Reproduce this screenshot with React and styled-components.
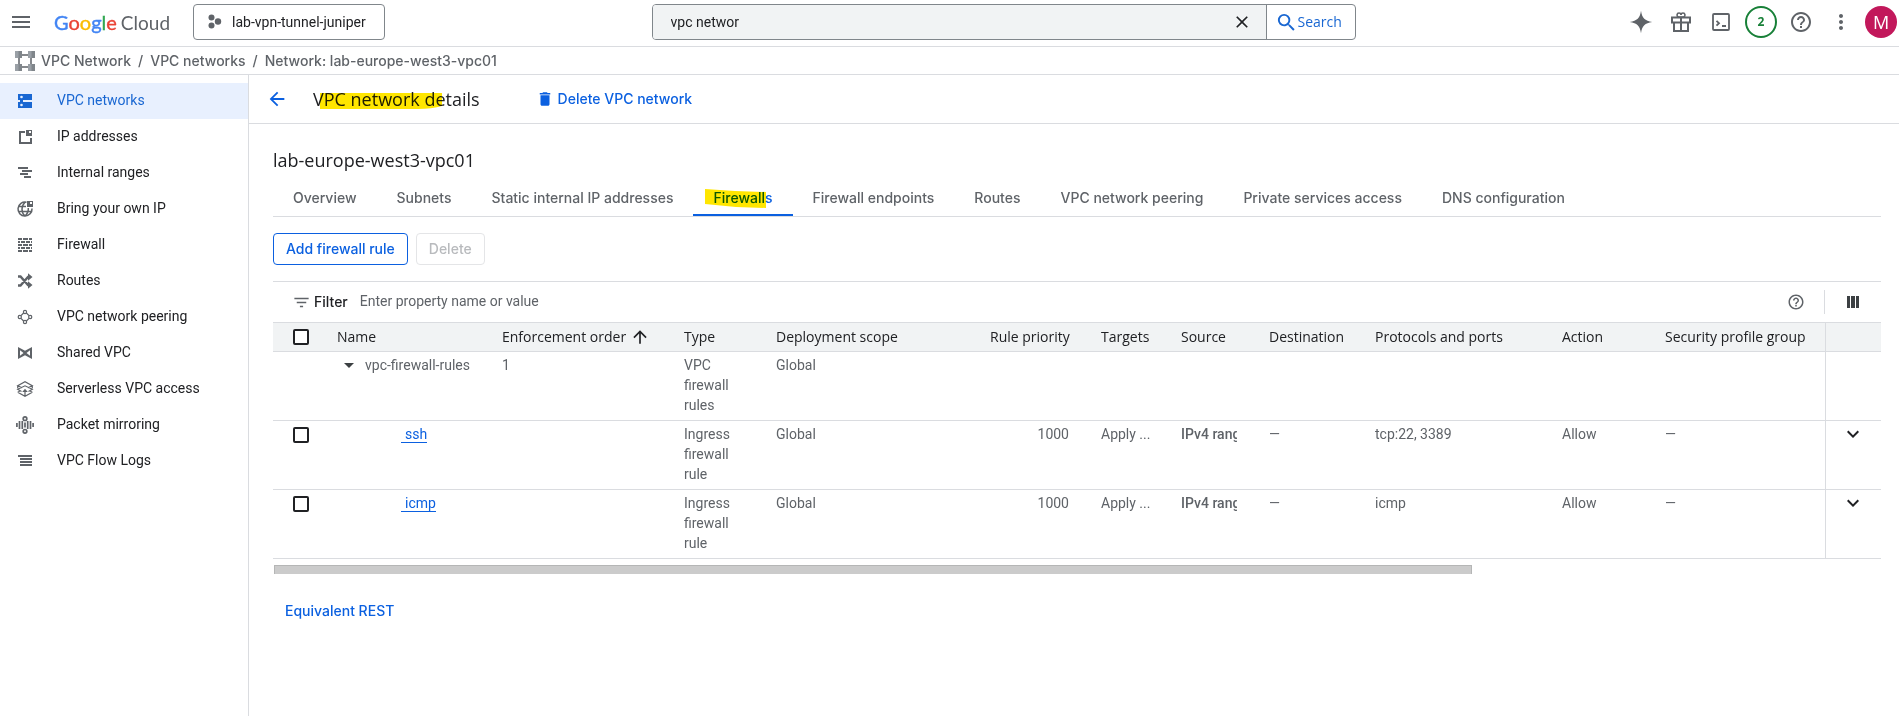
import * as React from 'react';
import styled, { createGlobalStyle } from 'styled-components';
import {
  MdArrowBack,
  MdArrowDropDown,
  MdArrowUpward,
  MdClose,
  MdDelete,
  MdExpandMore,
  MdFilterList,
  MdHelpOutline,
  MdMenu,
  MdMoreVert,
  MdSearch,
} from 'react-icons/md';

const c = {
  text: '#202124',
  grey: '#5f6368',
  border: '#dadce0',
  outline: '#80868b',
  blue: '#0b60e0',
  navBlue: '#1967d2',
  navActive: '#e8f0fe',
  panel: '#f1f3f4',
  green: '#188038',
  marker: '#ffe600',
};

const f = {
  body: "Roboto, 'Liberation Sans', sans-serif",
  label: "Inter, 'Open Sans', sans-serif",
  title: "'Open Sans', 'Noto Sans', sans-serif",
  logo: "Lato, 'Open Sans', sans-serif",
};

const GlobalStyle = createGlobalStyle`
  * {
    box-sizing: border-box;
  }

  body {
    margin: 0;
    background: #fff;
    color: ${c.text};
    font-family: ${f.body};
    font-size: 14px;
    line-height: 20px;
  }

  button,
  input {
    font: inherit;
    color: inherit;
  }

  button {
    padding: 0;
    border: none;
    background: none;
    cursor: pointer;
  }

  a {
    color: inherit;
    text-decoration: none;
  }

  svg {
    display: block;
    flex-shrink: 0;
  }
`;

const Page = styled.div`
  display: flex;
  flex-direction: column;
  min-height: 100vh;
`;

/* top bar */

const TopBar = styled.header`
  display: flex;
  align-items: center;
  height: 47px;
  padding-bottom: 2px;
  border-bottom: 1px solid ${c.border};
`;

const TopLeft = styled.div`
  flex: 6 1 0;
  display: flex;
  align-items: center;
  padding-left: 9px;
`;

const TopRight = styled.div`
  flex: 5 1 0;
  display: flex;
  align-items: center;
  justify-content: flex-end;
  gap: 8px;
  padding-right: 2px;
`;

const IconButton = styled.button`
  display: flex;
  align-items: center;
  justify-content: center;
  width: ${(p) => p.$size || 32}px;
  height: ${(p) => p.$size || 32}px;
  color: ${(p) => p.$color || c.grey};
`;

const Logo = styled.a`
  display: flex;
  align-items: baseline;
  gap: 4px;
  margin: 0 23px 0 21px;
  font-family: ${f.logo};
  font-size: 20px;
  line-height: 28px;
  color: ${c.grey};
`;

const LogoWord = styled.span`
  -webkit-text-stroke: 0.4px currentColor;
`;

const Letter = styled.span`
  color: ${(p) => p.$color};
`;

const LogoSuffix = styled.span`
  font-size: 19px;
`;

const ProjectPicker = styled.button`
  display: flex;
  align-items: center;
  gap: 10px;
  height: 36px;
  padding: 0 18px 0 14px;
  border: 1px solid ${c.outline};
  border-radius: 4px;
  white-space: nowrap;
`;

const SearchBox = styled.form`
  flex: 0 1 704px;
  display: flex;
  height: 36px;
  margin-right: 6px;
  border: 1px solid ${c.outline};
  border-radius: 4px;
  overflow: hidden;
`;

const SearchField = styled.div`
  flex: 1;
  display: flex;
  align-items: center;
  padding-right: 8px;
  background: ${c.panel};
`;

const SearchInput = styled.input`
  flex: 1;
  min-width: 0;
  padding: 0 18px;
  border: none;
  outline: none;
  background: transparent;
`;

const SearchButton = styled.button`
  display: flex;
  align-items: center;
  width: 89px;
  padding-left: 8px;
  border-left: 1px solid ${c.outline};
  font-family: ${f.title};
  font-weight: 500;
  color: ${c.navBlue};
`;

const Round = styled.button`
  width: 32px;
  height: 32px;
  border-radius: 50%;
  font-family: ${f.title};
`;

const Notifications = styled(Round)`
  border: 2px solid ${c.green};
  font-size: 12px;
  font-weight: 700;
  color: ${c.green};
`;

const Avatar = styled(Round)`
  background: #c2185b;
  font-size: 18px;
  color: #fff;
`;

/* breadcrumbs */

const Breadcrumbs = styled.nav`
  display: flex;
  align-items: center;
  gap: 7px;
  height: 28px;
  padding-left: 15px;
  border-bottom: 1px solid ${c.border};
  font-family: ${f.label};
  font-weight: 500;
  color: ${c.grey};
`;

const Product = styled.a`
  display: flex;
  align-items: center;
  gap: 6px;
`;

/* side navigation */

const Body = styled.div`
  flex: 1;
  display: flex;
`;

const SideNav = styled.nav`
  flex: 0 0 249px;
  padding-top: 8px;
  border-right: 1px solid ${c.border};
`;

const NavItem = styled.a`
  display: flex;
  align-items: center;
  gap: 23px;
  height: 36px;
  padding: 0 0 2px 16px;
  background: ${(p) => (p.$active ? c.navActive : 'transparent')};
  color: ${(p) => (p.$active ? c.navBlue : c.text)};

  svg {
    color: ${(p) => (p.$active ? c.navBlue : c.grey)};
    margin-top: 2px;
  }
`;

/* main area */

const Main = styled.main`
  flex: 1;
  min-width: 0;
`;

const PageHeader = styled.div`
  display: flex;
  align-items: center;
  height: 49px;
  padding-left: 17px;
  border-bottom: 1px solid ${c.border};
`;

const Title = styled.h1`
  position: relative;
  margin: 0 56px 0 25px;
  font-family: ${f.title};
  font-weight: 400;
  font-size: 18px;
  line-height: 24px;
`;

const TextButton = styled.button`
  display: flex;
  align-items: center;
  gap: 4px;
  font-family: ${f.label};
  font-weight: 500;
  color: ${c.blue};
`;

const Marker = styled.svg`
  position: absolute;
  left: ${(p) => p.$left}px;
  top: ${(p) => p.$top}px;
  fill: ${c.marker};
  mix-blend-mode: multiply;
  pointer-events: none;
`;

const Content = styled.div`
  padding: 24px 18px 24px 24px;
`;

const Name = styled.h2`
  margin: 0 0 12px;
  font-family: ${f.title};
  font-weight: 400;
  font-size: 18px;
  line-height: 24px;
`;

const Tabs = styled.div`
  display: flex;
  border-bottom: 1px solid ${c.border};
`;

const Tab = styled.button`
  position: relative;
  height: 32px;
  padding: 0 20px 3px;
  border-bottom: 2px solid ${(p) => (p.$active ? c.blue : 'transparent')};
  font-family: ${f.label};
  font-weight: 500;
  color: ${(p) => (p.$active ? c.blue : c.grey)};
  white-space: nowrap;
`;

const Actions = styled.div`
  display: flex;
  gap: 8px;
  padding: 16px 0;
`;

const OutlineButton = styled.button`
  height: 32px;
  padding: 0 12px;
  border: 1px solid ${c.blue};
  border-radius: 4px;
  font-family: ${f.label};
  font-weight: 500;
  color: ${c.blue};

  &:disabled {
    border-color: #e4e5e7;
    color: #b8babd;
  }
`;

const FilterBar = styled.div`
  display: flex;
  align-items: center;
  height: 41px;
  border-top: 1px solid ${c.border};
  padding-left: 19px;
`;

const FilterLabel = styled.label`
  display: flex;
  align-items: center;
  gap: 3px;
  font-family: ${f.label};
  font-weight: 500;

  svg {
    color: ${c.grey};
  }
`;

const FilterInput = styled.input`
  flex: 1;
  min-width: 0;
  padding: 0 12px 2px;
  border: none;
  outline: none;
  background: transparent;

  &::placeholder {
    color: ${c.grey};
    opacity: 1;
  }
`;

const Divider = styled.span`
  width: 1px;
  height: 24px;
  margin-left: 12px;
  background: ${c.border};
`;

const ColumnsButton = styled(IconButton)`
  width: 56px;
  color: #3c4043;
`;

const Table = styled.table`
  width: 100%;
  table-layout: fixed;
  border-collapse: separate;
  border-spacing: 0;
`;

const Th = styled.th`
  height: 30px;
  padding: 0 16px;
  border-top: 1px solid ${c.border};
  border-bottom: 1px solid ${c.border};
  background: ${c.panel};
  font-family: ${f.title};
  font-weight: 500;
  text-align: ${(p) => p.$align || 'left'};
  white-space: nowrap;
`;

const Sort = styled.span`
  display: flex;
  align-items: center;
  gap: 4px;
`;

const Td = styled.td`
  height: 69px;
  padding: 3px 16px 4px;
  border-bottom: 1px solid ${c.border};
  color: ${c.grey};
  text-align: ${(p) => p.$align || 'left'};
  vertical-align: top;
`;

const CheckTh = styled(Th)`
  padding: 0 0 0 20px;
`;

const CheckTd = styled(Td)`
  padding: 6px 0 0 20px;
`;

const MenuTh = styled(Th)`
  border-left: 1px solid ${c.border};
`;

const MenuTd = styled(Td)`
  padding: 3px 0 0 17px;
  border-left: 1px solid ${c.border};
`;

const Checkbox = styled.input`
  appearance: none;
  display: block;
  width: 16px;
  height: 16px;
  margin: 0;
  border: 2px solid ${c.text};
  border-radius: 2px;
  background: #fff;
`;

const Group = styled.span`
  display: flex;
  align-items: center;
  gap: 4px;
  height: 20px;
  white-space: nowrap;

  svg {
    color: #3c4043;
  }
`;

const RuleLink = styled.a`
  margin-left: 64px;
  padding-left: 4px;
  border-bottom: 1px solid ${c.blue};
  color: ${c.blue};
`;

const NoWrap = styled.div`
  white-space: nowrap;
`;

const Clip = styled(NoWrap)`
  overflow: hidden;
  font-weight: 500;
`;

const ScrollBar = styled.div`
  width: 74.5%;
  height: 9px;
  margin: 6px 0 0 1px;
  border: 1px solid #b5b6b6;
  border-width: 1px 1px 0;
  background: #cbcbcb;
`;

const Footer = styled.div`
  padding: 27px 12px 0;
`;

/* icons without a counterpart in the icon set */

const Glyph = ({ size = 18, children }) => (
  <svg width={size} height={size} viewBox="0 0 18 18" fill="currentColor">
    {children}
  </svg>
);

const Stroke = ({ children, width = 1.3 }) => (
  <g fill="none" stroke="currentColor" strokeWidth={width}>
    {children}
  </g>
);

const NetworksIcon = () => (
  <Glyph>
    <path d="M2 2h14v6H7v2h9v6H2v-6h2V8H2z" />
    <circle cx="5.500" cy="5" r="1.300" fill="#e8f0fe" />
    <circle cx="5.500" cy="13" r="1.300" fill="#e8f0fe" />
  </Glyph>
);

const AddressesIcon = () => (
  <Glyph>
    <path d="M3 3h6v2H5v9h9v-4h2v6H3z" />
    <path d="M10 2h6v6h-6zM13 3v2h2V3z" fillRule="evenodd" />
  </Glyph>
);

const RangesIcon = () => (
  <Glyph>
    <path d="M2 3h10v2H2zM6 6h10v2H6zM4 9h8v2H4zM8 12h7v2H8z" />
  </Glyph>
);

const OwnIpIcon = () => (
  <Glyph>
    <Stroke width={1.5}>
      <path d="M10.500 2.200A7 7 0 1 0 16 8.500M9 2.200c-4 4-4 10 0 13.800 2.600-2.500 3.600-5 3.300-8M2.300 6.500H10M2.300 11.500h13.200" />
    </Stroke>
    <path d="M11 1h6v6h-6zM14 2v2h2V2z" fillRule="evenodd" />
  </Glyph>
);

const FirewallIcon = () => (
  <Glyph>
    <path d="M2 2h4v2H2zM7 2h5v2H7zM13 2h3v2h-3zM2 5h2v2H2zM5 5h4v2H5zM10 5h4v2h-4zM15 5h1v2h-1zM2 8h4v2H2zM7 8h5v2H7zM13 8h3v2h-3zM2 11h2v2H2zM5 11h4v2H5zM10 11h4v2h-4zM15 11h1v2h-1zM2 14h4v2H2zM7 14h5v2H7zM13 14h3v2h-3z" />
  </Glyph>
);

const RoutesIcon = () => (
  <Glyph>
    <Stroke width={2.4}>
      <path d="M2 4.500h2.500l7.500 8.500h1.500M2 13.500h2.500L12 5h1.500" />
    </Stroke>
    <path d="M12 1.200 16.500 5 12 8.700zM12 9.300l4.500 3.700-4.500 3.700z" />
  </Glyph>
);

const PeeringIcon = () => (
  <Glyph>
    <Stroke width={1.2}>
      <circle cx="9" cy="4" r="1.600" />
      <circle cx="9" cy="14" r="1.600" />
      <circle cx="3.800" cy="9" r="1.600" />
      <circle cx="14.200" cy="9" r="1.600" />
      <path d="M7.600 5 5 7.700M10.400 5 13 7.700M5 10.300 7.600 13M13 10.300 10.400 13" />
    </Stroke>
  </Glyph>
);

const SharedIcon = () => (
  <Glyph>
    <path
      d="M2 3l7 3.800L16 3v12l-7-3.800L2 15zM4 6.300v5.400L7.500 9zM14 6.300v5.400L10.500 9z"
      fillRule="evenodd"
    />
  </Glyph>
);

const ServerlessIcon = () => (
  <Glyph>
    <Stroke width={1.2}>
      <path d="M6 7.800 1.700 5.700 9 1.700l7.300 4L12 7.800M1.700 5.700v2.500M16.300 5.700v2.500M5.500 11.500 1.700 9.300 9 5.800l7.300 3.500-3.800 2.200M1.700 12.300 9 16.300l7.300-4M1.700 12.300l2-1M16.300 12.300l-2-1M9 10v6.300" />
    </Stroke>
    <path d="M9 8.800l2.800 3.200H6.200z" />
  </Glyph>
);

const MirroringIcon = () => (
  <Glyph>
    <Stroke width={1.7}>
      <path d="M.9 7v4M3.500 5v8M14.500 5v8M17.100 7v4" />
      <path d="M6.300 5v8M11.700 5v8M9 6.500v5" />
      <circle cx="9" cy="2.700" r="1.800" />
      <circle cx="9" cy="15.300" r="1.800" />
    </Stroke>
  </Glyph>
);

const LogsIcon = () => (
  <Glyph>
    <path d="M2 3h14v2H2zM4 6h12v2H4zM4 9h12v2H4zM4 12h12v2H4z" />
  </Glyph>
);

const ProductIcon = () => (
  <svg width="20" height="20" viewBox="0 0 20 20">
    <path d="M6 4h8M6 16h8M4 6v8M16 6v8" stroke="#5f6368" strokeWidth="1.500" />
    <path d="M0 0h4v7H0zM13 0h4v7h-4zM0 13h4v7H0zM13 13h4v7h-4z" fill="#9aa0a6" />
    <path d="M3.500 0H7v7H3.500zM16.500 0H20v7h-3.500zM3.500 13H7v7H3.500zM16.500 13H20v7h-3.500z" fill="#80868b" />
  </svg>
);

const ProjectIcon = () => (
  <svg width="14" height="16" viewBox="0 0 14 16" fill={c.grey}>
    <circle cx="3.500" cy="3.500" r="3" />
    <circle cx="3.500" cy="11.500" r="3" />
    <circle cx="10" cy="7.500" r="3.200" />
  </svg>
);

const SparkIcon = () => (
  <svg width="24" height="24" viewBox="0 0 24 24" fill="currentColor">
    <path d="M12 .8C13 8 16 11 23.200 12 16 13 13 16 12 23.200 11 16 8 13 .8 12 8 11 11 8 12 .8z" />
  </svg>
);

const GiftIcon = () => (
  <svg width="20" height="22" viewBox="0 0 20 22" fill="none" stroke="currentColor" strokeWidth="2">
    <path d="M1 6.500h18v5H1zM3 11.500h14V20H3zM10 6v14" />
    <path d="M10 6H7.500a2 2 0 1 1 2.500-2.200A2 2 0 1 1 12.500 6z" strokeWidth="1.600" />
  </svg>
);

const ShellIcon = () => (
  <svg width="18" height="18" viewBox="0 0 18 18" fill="none" stroke="currentColor">
    <rect x="1" y="1" width="16" height="16" rx="1" strokeWidth="1.800" />
    <path d="M4.500 7.800 7 10.200 4.500 12.700M10 13h4" strokeWidth="1.800" />
  </svg>
);

const ColumnsIcon = () => (
  <svg width="12" height="12" viewBox="0 0 12 12" fill="currentColor">
    <path d="M0 0h3v12H0zM4 0h4v12H4zM9 0h3v12H9z" />
  </svg>
);

const navItems = [
  { label: 'VPC networks', Icon: NetworksIcon, active: true },
  { label: 'IP addresses', Icon: AddressesIcon },
  { label: 'Internal ranges', Icon: RangesIcon },
  { label: 'Bring your own IP', Icon: OwnIpIcon },
  { label: 'Firewall', Icon: FirewallIcon },
  { label: 'Routes', Icon: RoutesIcon },
  { label: 'VPC network peering', Icon: PeeringIcon },
  { label: 'Shared VPC', Icon: SharedIcon },
  { label: 'Serverless VPC access', Icon: ServerlessIcon },
  { label: 'Packet mirroring', Icon: MirroringIcon },
  { label: 'VPC Flow Logs', Icon: LogsIcon },
];

const tabs = [
  'Overview',
  'Subnets',
  'Static internal IP addresses',
  'Firewalls',
  'Firewall endpoints',
  'Routes',
  'VPC network peering',
  'Private services access',
  'DNS configuration',
];

const logoLetters = [
  ['G', '#4285f4'],
  ['o', '#ea4335'],
  ['o', '#fbbc04'],
  ['g', '#4285f4'],
  ['l', '#34a853'],
  ['e', '#ea4335'],
];

// the column with no width takes what is left
const columnWidths = [48, 165, 182, 92, 214, 111, 80, 88, 106, undefined, 103, 176, 56];

const rules = [
  { name: 'ssh', ports: 'tcp:22, 3389' },
  { name: 'icmp', ports: 'icmp' },
];

function Header() {
  return (
    <TopBar>
      <TopLeft>
        <IconButton $size={24} aria-label="Navigation menu">
          <MdMenu size={24} />
        </IconButton>
        <Logo href="#" aria-label="Google Cloud">
          <LogoWord>
            {logoLetters.map(([letter, color], i) => (
              <Letter key={i} $color={color}>{letter}</Letter>
            ))}
          </LogoWord>
          <LogoSuffix>Cloud</LogoSuffix>
        </Logo>
        <ProjectPicker>
          <ProjectIcon />
          lab-vpn-tunnel-juniper
        </ProjectPicker>
      </TopLeft>
      <SearchBox onSubmit={(e) => e.preventDefault()}>
        <SearchField>
          <SearchInput aria-label="Search" defaultValue="vpc networ" />
          <IconButton type="button" aria-label="Clear" $color={c.text}>
            <MdClose size={20} />
          </IconButton>
        </SearchField>
        <SearchButton>
          <MdSearch size={23} />
          Search
        </SearchButton>
      </SearchBox>
      <TopRight>
        <IconButton aria-label="Gemini"><SparkIcon /></IconButton>
        <IconButton aria-label="Free trial"><GiftIcon /></IconButton>
        <IconButton aria-label="Cloud Shell"><ShellIcon /></IconButton>
        <Notifications>2</Notifications>
        <IconButton aria-label="Help"><MdHelpOutline size={24} /></IconButton>
        <IconButton aria-label="More"><MdMoreVert size={24} /></IconButton>
        <Avatar>M</Avatar>
      </TopRight>
    </TopBar>
  );
}

function RulesTable() {
  return (
    <Table>
      <colgroup>
        {columnWidths.map((width, i) => <col key={i} width={width} />)}
      </colgroup>
      <thead>
        <tr>
          <CheckTh><Checkbox type="checkbox" aria-label="Select all rules" /></CheckTh>
          <Th>Name</Th>
          <Th><Sort>Enforcement order <MdArrowUpward size={20} /></Sort></Th>
          <Th>Type</Th>
          <Th>Deployment scope</Th>
          <Th $align="right">Rule priority</Th>
          <Th>Targets</Th>
          <Th>Source</Th>
          <Th>Destination</Th>
          <Th>Protocols and ports</Th>
          <Th>Action</Th>
          <Th>Security profile group</Th>
          <MenuTh />
        </tr>
      </thead>
      <tbody>
        <tr>
          <CheckTd />
          <Td><Group><MdArrowDropDown size={24} />vpc-firewall-rules</Group></Td>
          <Td>1</Td>
          <Td>VPC firewall rules</Td>
          <Td>Global</Td>
          <Td $align="right" />
          <Td />
          <Td />
          <Td />
          <Td />
          <Td />
          <Td />
          <MenuTd />
        </tr>
        {rules.map(({ name, ports }) => (
          <tr key={name}>
            <CheckTd><Checkbox type="checkbox" aria-label={`Select ${name}`} /></CheckTd>
            <Td><RuleLink href="#">{name}</RuleLink></Td>
            <Td />
            <Td>Ingress firewall rule</Td>
            <Td>Global</Td>
            <Td $align="right">1000</Td>
            <Td><NoWrap>Apply ...</NoWrap></Td>
            <Td><Clip>IPv4 rang</Clip></Td>
            <Td>—</Td>
            <Td>{ports}</Td>
            <Td>Allow</Td>
            <Td>—</Td>
            <MenuTd>
              <IconButton $size={20} $color={c.text} aria-label={`Expand ${name}`}>
                <MdExpandMore size={24} />
              </IconButton>
            </MenuTd>
          </tr>
        ))}
      </tbody>
    </Table>
  );
}

export default function App() {
  return (
    <Page>
      <GlobalStyle />
      <Header />
      <Breadcrumbs aria-label="Breadcrumb">
        <Product href="#"><ProductIcon />VPC Network</Product>
        <span>/</span>
        <a href="#">VPC networks</a>
        <span>/</span>
        <span>Network: lab-europe-west3-vpc01</span>
      </Breadcrumbs>
      <Body>
        <SideNav>
          {navItems.map(({ label, Icon, active }) => (
            <NavItem key={label} href="#" $active={active}>
              <Icon />
              {label}
            </NavItem>
          ))}
        </SideNav>
        <Main>
          <PageHeader>
            <IconButton $size={22} $color={c.blue} aria-label="Back">
              <MdArrowBack size={22} />
            </IconButton>
            <Title>
              VPC network details
              <Marker $left={7} $top={6} width="123" height="17">
                <path d="M0 0h122v13q-10 3-24 3H0z" />
              </Marker>
            </Title>
            <TextButton>
              <MdDelete size={18} />
              Delete VPC network
            </TextButton>
          </PageHeader>
          <Content>
            <Name>lab-europe-west3-vpc01</Name>
            <Tabs role="tablist">
              {tabs.map((tab) => {
                const active = tab === 'Firewalls';
                return (
                  <Tab key={tab} role="tab" aria-selected={active} $active={active}>
                    {tab}
                    {active && (
                      <Marker $left={12} $top={5} width="62" height="20">
                        <path d="M0 0l30 2 31 1v16l-30-1-31-3z" />
                      </Marker>
                    )}
                  </Tab>
                );
              })}
            </Tabs>
            <Actions>
              <OutlineButton>Add firewall rule</OutlineButton>
              <OutlineButton disabled>Delete</OutlineButton>
            </Actions>
            <FilterBar>
              <FilterLabel htmlFor="filter">
                <MdFilterList size={19} />
                Filter
              </FilterLabel>
              <FilterInput id="filter" placeholder="Enter property name or value" />
              <IconButton $size={32} aria-label="Filter help"><MdHelpOutline size={18} /></IconButton>
              <Divider />
              <ColumnsButton aria-label="Column display options"><ColumnsIcon /></ColumnsButton>
            </FilterBar>
            <RulesTable />
            <ScrollBar />
            <Footer>
              <TextButton>Equivalent REST</TextButton>
            </Footer>
          </Content>
        </Main>
      </Body>
    </Page>
  );
}
